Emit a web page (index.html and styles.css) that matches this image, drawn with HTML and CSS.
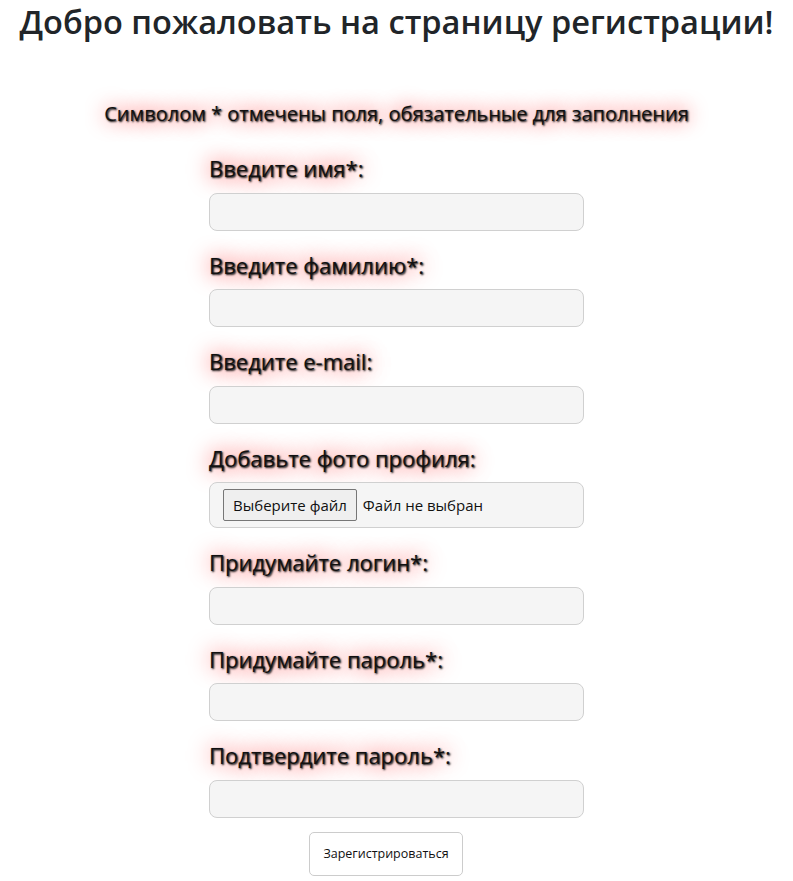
FILE: index.html
```html
<!DOCTYPE html>
<html lang="ru">
<head>
<meta charset="utf-8">
<title>Регистрация</title>
<link rel="stylesheet" href="styles.css">
</head>
<body>
<h1 class="title">Добро пожаловать на страницу регистрации!</h1>
<p class="note glow">Символом * отмечены поля, обязательные для заполнения</p>
<form class="form">
  <div class="group">
    <label class="label glow" for="f1">Введите имя*:</label>
    <input class="field" id="f1" type="text">
  </div>
  <div class="group">
    <label class="label glow" for="f2">Введите фамилию*:</label>
    <input class="field" id="f2" type="text">
  </div>
  <div class="group">
    <label class="label glow" for="f3">Введите e-mail:</label>
    <input class="field" id="f3" type="text">
  </div>
  <div class="group">
    <label class="label glow">Добавьте фото профиля:</label>
    <div class="file">
      <span class="file-btn">Выберите файл</span>
      <span class="file-text">Файл не выбран</span>
    </div>
  </div>
  <div class="group">
    <label class="label glow" for="f5">Придумайте логин*:</label>
    <input class="field" id="f5" type="text">
  </div>
  <div class="group">
    <label class="label glow" for="f6">Придумайте пароль*:</label>
    <input class="field" id="f6" type="password">
  </div>
  <div class="group">
    <label class="label glow" for="f7">Подтвердите пароль*:</label>
    <input class="field" id="f7" type="password">
  </div>
  <button class="submit" type="button">Зарегистрироваться</button>
</form>
</body>
</html>
```
FILE: styles.css
```css
body {
  margin: 0;
  font-family: "Open Sans", "Noto Sans", sans-serif;
  color: #212529;
  background: #fff;
}
.title {
  margin: 0;
  padding-top: 0;
  font-size: 32.6px;
  line-height: 44px;
  font-weight: 600;
  text-align: center;
}
.note {
  margin: 55px 0 0;
  font-size: 20px;
  line-height: 30px;
  text-align: center;
  color: #111;
}
.glow {
  text-shadow: 1px 1px 2px #000, 0 0 1em #ff0000;
}
.form {
  width: 375px;
  margin: 24px auto 0;
  display: flex;
  flex-direction: column;
}
.group {
  display: flex;
  flex-direction: column;
  margin-bottom: 19px;
}
.label {
  font-size: 22px;
  line-height: 30px;
  margin-bottom: 9.5px;
  color: #111;
}
.field {
  box-sizing: border-box;
  height: 38px;
  width: 375px;
  margin: 0;
  background: #f5f5f5;
  border: 1px solid #d0d0d0;
  border-radius: 8px;
  font: inherit;
}
.file {
  box-sizing: border-box;
  height: 46px;
  width: 375px;
  background: #f5f5f5;
  border: 1px solid #d0d0d0;
  border-radius: 8px;
  display: flex;
  align-items: center;
  padding-left: 13px;
  gap: 6px;
  font-size: 15px;
}
.file-btn {
  background: #efefef;
  border: 1px solid #767676;
  border-radius: 2px;
  padding: 4px 9px;
  line-height: 22px;
  color: #111;
}
.file-text {
  color: #111;
}
.submit {
  align-self: flex-start;
  margin-left: 100px;
  margin-top: -5px;
  width: 154px;
  height: 44px;
  background: #fff;
  border: 1px solid #ccc;
  border-radius: 5px;
  font-family: inherit;
  font-size: 12.5px;
  color: #111;
}
```
